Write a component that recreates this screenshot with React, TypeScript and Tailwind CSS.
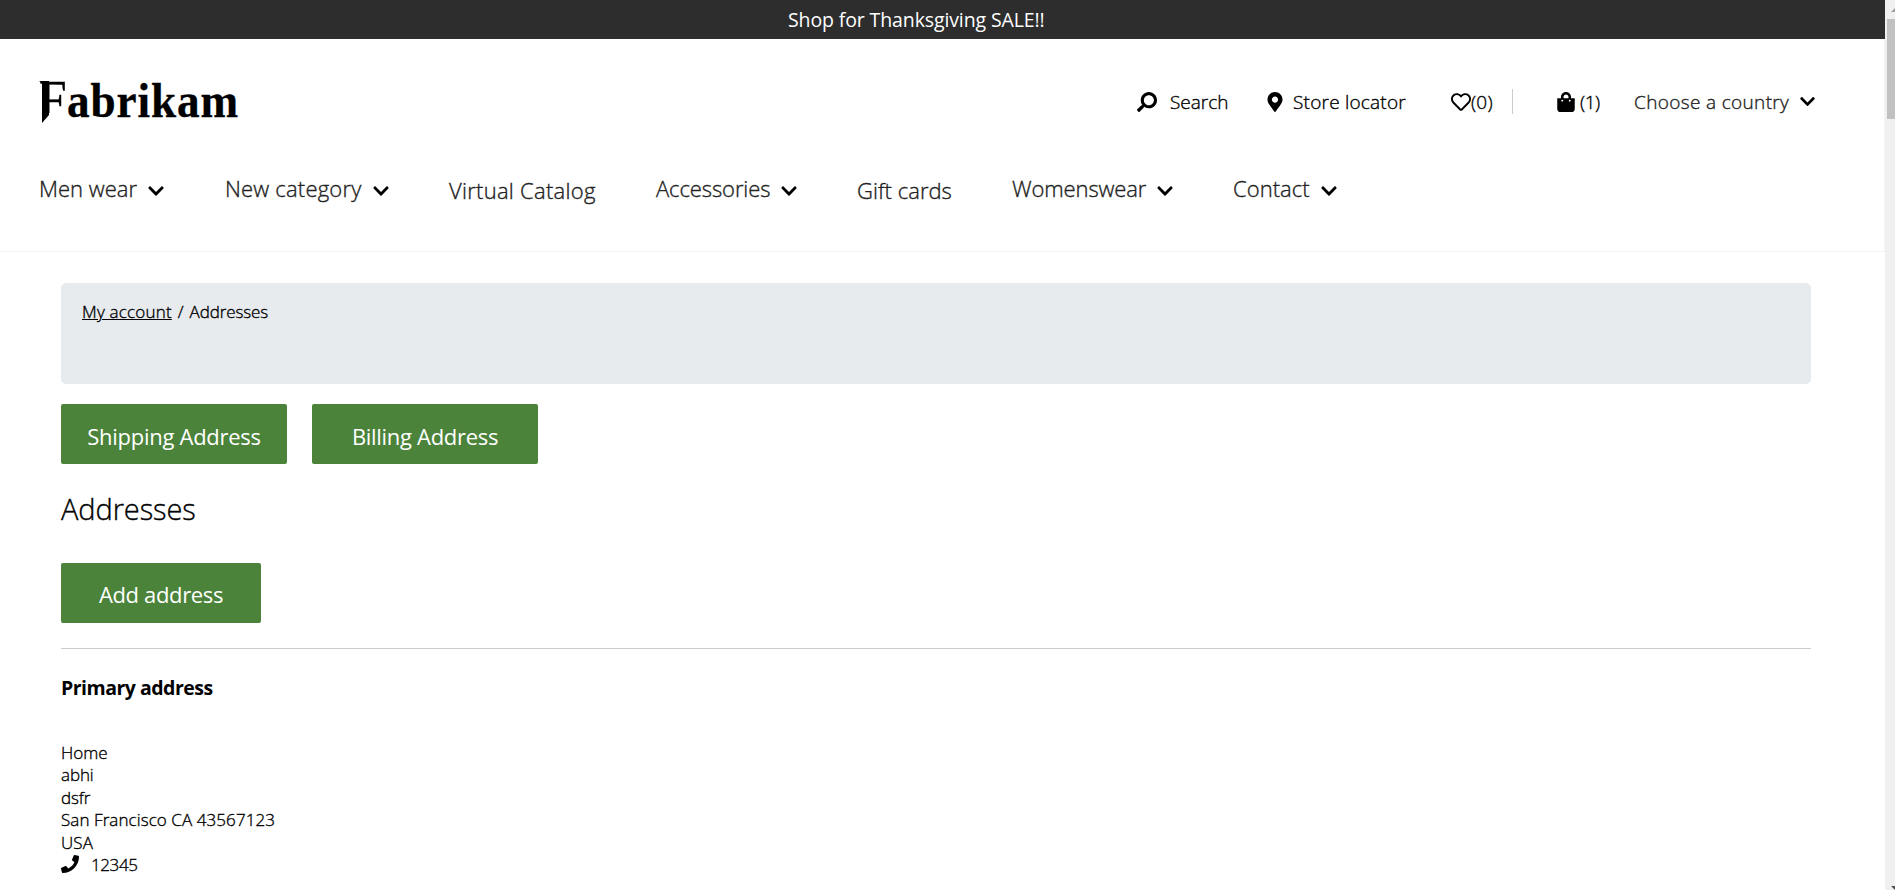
import React from "react";
import {
  FaChevronDown,
  FaMapMarkerAlt,
  FaPhone,
  FaRegHeart,
  FaSearch,
  FaShoppingBag,
} from "react-icons/fa";

type NavItem = {
  label: string;
  menu: boolean;
  box: string;
  text: string;
};

const navItems: NavItem[] = [
  { label: "Men wear", menu: true, box: "w-[186px]", text: "w-[108px] tracking-[0px]" },
  { label: "New category", menu: true, box: "w-[224px]", text: "w-[147px] tracking-[0.2px]" },
  { label: "Virtual Catalog", menu: false, box: "w-[207px]", text: "tracking-[0.27px]" },
  { label: "Accessories", menu: true, box: "w-[201px]", text: "w-[124px] tracking-[-0.1px]" },
  { label: "Gift cards", menu: false, box: "w-[155px]", text: "tracking-[0.03px]" },
  { label: "Womenswear", menu: true, box: "w-[221px]", text: "w-[144px] tracking-[-0.12px]" },
  { label: "Contact", menu: true, box: "w-[110px]", text: "w-[87px] tracking-[0.05px]" },
];

const addressLines = [
  { text: "Home", tracking: "tracking-[0.05px]" },
  { text: "abhi", tracking: "tracking-[-0.1px]" },
  { text: "dsfr", tracking: "tracking-[-0.1px]" },
  { text: "San Francisco CA 43567123", tracking: "tracking-[0.08px]" },
  { text: "USA", tracking: "tracking-[0.1px]" },
];

function Logo() {
  return (
    <div className="relative flex h-[50px] w-[200px] font-['Liberation_Serif'] text-black">
      <span className="block w-[28px] origin-left scale-x-[0.9] text-[55px] font-normal leading-[45px]">F</span>
      <span className="block origin-left scale-x-[0.94] text-[48px] font-bold leading-[47px] tracking-[1px]">
        abrikam
      </span>
      <svg className="absolute left-0 top-0" width="30" height="50" viewBox="0 0 30 50">
        <rect x="0" y="36" width="25" height="8" fill="#ffffff" />
        <polygon points="0,4 10,4 10,38 3,46 3,6" />
      </svg>
    </div>
  );
}

function Header() {
  return (
    <header className="h-[213px] border-b border-r border-[#f4f4f4] bg-white">
      <div className="flex h-[125px] items-start">
        <div className="ml-[39px] mt-[38px]">
          <Logo />
        </div>
        <div className="ml-auto mt-[50px] flex h-[25px] items-center text-[19px] leading-[25px] text-black">
          <FaSearch className="-ml-[2px] mr-[2px] size-[20px] -scale-x-100" />
          <a className="ml-[11px] w-[98px] pt-px">Search</a>
          <FaMapMarkerAlt className="-ml-px mr-px h-[20px] w-[16px]" />
          <a className="ml-[9px] w-[158px] pt-px tracking-[0.22px]">Store locator</a>
          <FaRegHeart className="size-[20px]" />
          <span className="w-[41px] pt-px tracking-[0.2px]">(0)</span>
          <span className="h-[25px] w-px bg-[#cccccc]" />
          <FaShoppingBag className="ml-[44px] h-[20px] w-[18px]" />
          <span className="ml-[5px] w-[54px] pt-px tracking-[-0.5px]">(1)</span>
          <span className="w-[165px] pt-px tracking-[0.35px] text-[#222222]">Choose a country</span>
          <FaChevronDown className="mr-[68px] size-[17px]" />
        </div>
      </div>
      <nav className="ml-[39px] flex h-[48px] items-center text-[22px] leading-[30px] text-[#222222]">
        {navItems.map((item) => (
          <div key={item.label} className={`flex items-center ${item.box} ${item.menu ? "" : "pt-[3px]"}`}>
            <span className={`whitespace-nowrap ${item.text}`}>{item.label}</span>
            {item.menu && <FaChevronDown className="mt-[6px] size-[18px] text-black" />}
          </div>
        ))}
      </nav>
    </header>
  );
}

function Scrollbar() {
  return (
    <div className="flex h-full w-[10px] flex-col items-end justify-between bg-[#f0f0f0]">
      <div>
        <svg className="block" width="8" height="19" viewBox="0 0 8 19">
          <polygon points="8,8 4,12 8,12" fill="#a0a0a0" />
        </svg>
        <div className="h-[100px] w-[8px] bg-[#c1c1c1]" />
      </div>
      <svg className="block" width="8" height="4" viewBox="0 0 8 4">
        <polygon points="4,0 8,0 8,4" fill="#505050" />
      </svg>
    </div>
  );
}

export default function App() {
  return (
    <div className="flex h-[890px] w-[1895px] overflow-hidden bg-white font-['Open_Sans',sans-serif] font-light text-black">
      <div className="w-[1885px] [-webkit-text-stroke:0.35px]">
        <div className="h-[39px] bg-[#2d2d2d] pl-[788px] text-[19.5px] font-normal leading-[40px] tracking-[-0.12px] text-white [-webkit-text-stroke:0px]">
          Shop for Thanksgiving SALE!!
        </div>
        <Header />
        <main className="w-[1811px] pl-[61px] pt-[31px]">
          <div className="flex h-[101px] gap-[6px] rounded-[5px] bg-[#e7ebee] pl-[21px] pt-[16px] text-[17px] leading-[25px]">
            <a className="tracking-[0.2px] underline">My account</a>
            <span>/</span>
            <span className="tracking-[-0.1px]">Addresses</span>
          </div>
          <div className="mt-5 flex gap-[25px] text-[22px] font-normal text-white [-webkit-text-stroke:0px]">
            <button className="h-[60px] w-[226px] rounded-[2px] bg-[#4b833a] pb-[2px] pt-[4px] leading-[56px] tracking-[-0.27px]">Shipping Address</button>
            <button className="h-[60px] w-[226px] rounded-[2px] bg-[#4b833a] pb-[2px] pt-[4px] leading-[56px] tracking-[-0.3px]">Billing Address</button>
          </div>
          <h1 className="mt-[25px] text-[29px] leading-[40px] tracking-[-0.1px]">Addresses</h1>
          <button className="mt-[34px] block h-[60px] w-[200px] rounded-[2px] bg-[#4b833a] pt-[2px] text-[22px] font-normal leading-[58px] tracking-[-0.35px] text-white [-webkit-text-stroke:0px]">
            Add address
          </button>
          <hr className="mt-[25px] border-[#cccccc]" />
          <h2 className="mt-[26px] text-[19.5px] font-bold leading-[26px] tracking-[-0.5px] [-webkit-text-stroke:0px]">Primary address</h2>
          <address className="mt-[41px] text-[17px] not-italic leading-[22.4px]">
            {addressLines.map((line) => (
              <div key={line.text} className={line.tracking}>
                {line.text}
              </div>
            ))}
            <div className="flex">
              <FaPhone className="mr-[12px] mt-px size-[18px]" />
              <span className="tracking-[-0.4px]">12345</span>
            </div>
          </address>
        </main>
      </div>
      <Scrollbar />
    </div>
  );
}
